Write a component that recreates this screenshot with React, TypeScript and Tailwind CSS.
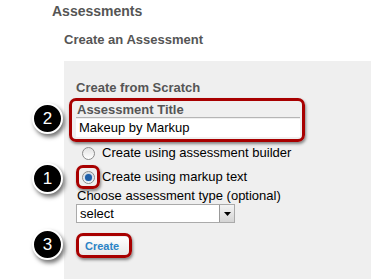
import type { ReactNode } from "react";

function Step({ n, className }: { n: number; className: string }) {
	return (
		<div
			className={`absolute flex h-[31px] w-[31px] items-center justify-center rounded-full border-2 border-white bg-black text-[17px] text-white shadow-[2px_3px_4px_rgba(0,0,0,0.55)] ${className}`}
		>
			{n}
		</div>
	);
}

function Callout({ className }: { className: string }) {
	return (
		<div
			className={`absolute rounded-[7px] border-[3px] border-[#a80000] shadow-[1px_2px_3px_rgba(0,0,0,0.45)] ${className}`}
		/>
	);
}

function Radio({ checked, children }: { checked?: boolean; children: ReactNode }) {
	return (
		<label className="flex h-6 items-center gap-[7px] pl-[6px]">
			<span className="flex h-[13px] w-[13px] items-center justify-center rounded-full border border-[#8a8a8a] bg-gradient-to-b from-[#e2e2e2] to-white">
				{checked && <span className="h-[7px] w-[7px] rounded-full bg-[#1f5fa8] shadow-[0_0_2px_#6aa5e0]" />}
			</span>
			{children}
		</label>
	);
}

export default function App() {
	return (
		<div className="relative h-[279px] w-[371px] overflow-hidden bg-white font-['Liberation_Sans',Arial,sans-serif] text-[13px] text-black">
			<h2 className="pl-[52px] pt-[3px] text-[14px] font-bold leading-[17px] text-[#555]">Assessments</h2>
			<h3 className="pl-[64px] pt-[12px] text-[13px] font-bold leading-[16px] text-[#555]">Create an Assessment</h3>
			<div className="ml-[64px] mt-[13px] flex h-[300px] flex-col items-start bg-[#efefef] pl-[12px] pt-[19px]">
				<h4 className="text-[13px] font-bold leading-[16px] text-[#555]">Create from Scratch</h4>
				<div className="mt-[6px] w-[224px]">
					<div className="border-b border-[#b5b5b5] pl-[1px] text-[13px] font-bold leading-[15px] text-[#555]">
						Assessment Title
					</div>
					<div className="mt-[1px] h-[18px] bg-white pl-[3px] leading-[18px]">Makeup by Markup</div>
				</div>
				<div className="mt-[4px]">
					<Radio>Create using assessment builder</Radio>
					<Radio checked>Create using markup text</Radio>
				</div>
				<div className="pl-[1px] leading-[14px]">Choose assessment type (optional)</div>
				<div className="mt-[1px] flex h-[19px] w-[159px] border border-[#aaa] bg-white">
					<span className="flex-1 pl-[3px] leading-[17px]">select</span>
					<span className="flex w-[15px] items-center justify-center border-l border-[#999] bg-gradient-to-b from-[#f4f4f4] to-[#d4d4d4]">
						<svg width="7" height="4" viewBox="0 0 7 4">
							<path d="M0 0h7L3.5 4z" fill="#000" />
						</svg>
					</span>
				</div>
				<button className="ml-[3px] mt-[14px] flex h-[19px] w-[50px] items-center rounded-[3px] bg-gradient-to-b from-white to-[#e8e8e8] pl-[6px] text-[11px] font-bold text-[#2b83c6]">
					Create
				</button>
			</div>

			<Callout className="left-[69px] top-[98px] h-[44px] w-[236px]" />
			<Callout className="left-[76px] top-[165px] h-[24px] w-[24px]" />
			<Callout className="left-[76px] top-[233px] h-[25px] w-[56px]" />

			<Step n={2} className="left-[32px] top-[103px]" />
			<Step n={1} className="left-[32px] top-[163px]" />
			<Step n={3} className="left-[32px] top-[229px]" />
		</div>
	);
}
